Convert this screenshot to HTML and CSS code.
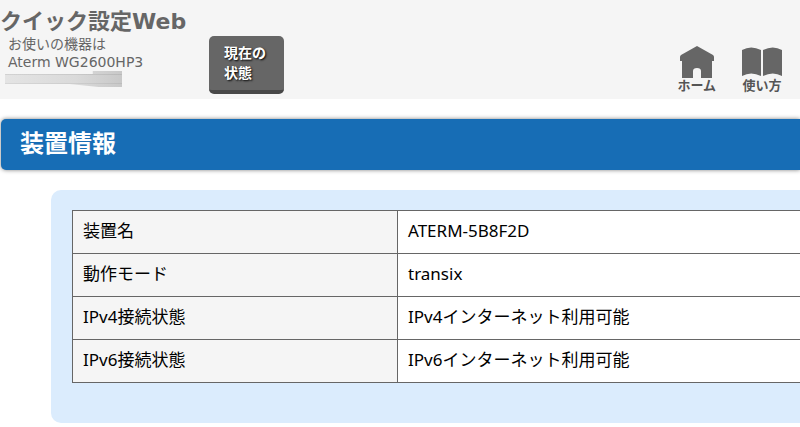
FILE: index.html
```html
<!DOCTYPE html>
<html lang="ja">
<head>
    <meta charset="UTF-8">
    <meta name="viewport" content="width=device-width, initial-scale=1.0">
    <title>クイック設定Web</title>
    <link rel="stylesheet" href="styles.css">
</head>
<body>
    <header class="header">
        <div class="brand">
            <p class="logo">クイック設定Web</p>
            <p class="model">お使いの機器は<br>Aterm WG2600HP3</p>
            <div class="mask"></div>
        </div>

        <button type="button" class="status-button">現在の<br>状態</button>

        <nav class="nav">
            <a href="#" class="nav-link">
                <svg width="34" height="33" viewBox="0 0 34 33" aria-hidden="true">
                    <path fill="#666" d="M17 0 L33 9 Q34 10 34 11 V15 H32 V32 H21 V25 Q21 22 17 22 Q13 22 13 25 V32 H2 V15 H0 V11 Q0 10 1 9 Z"/>
                </svg>
                <span>ホーム</span>
            </a>
            <a href="#" class="nav-link">
                <svg width="40" height="33" viewBox="0 0 40 33" aria-hidden="true">
                    <path fill="#666" d="M0 4 Q9 -1 19 4 V30 Q9 25 0 30 Z M21 4 Q31 -1 40 4 V30 Q31 25 21 30 Z"/>
                </svg>
                <span>使い方</span>
            </a>
        </nav>
    </header>

    <main>
        <h1 class="page-title">装置情報</h1>

        <section class="panel">
            <table class="info">
                <tr>
                    <th scope="row">装置名</th>
                    <td>ATERM-5B8F2D</td>
                </tr>
                <tr>
                    <th scope="row">動作モード</th>
                    <td>transix</td>
                </tr>
                <tr>
                    <th scope="row">IPv4接続状態</th>
                    <td>IPv4インターネット利用可能</td>
                </tr>
                <tr>
                    <th scope="row">IPv6接続状態</th>
                    <td>IPv6インターネット利用可能</td>
                </tr>
            </table>
        </section>
    </main>
</body>
</html>
```
FILE: styles.css
```css
* {
    box-sizing: border-box;
}

body {
    margin: 0;
    background-color: #fff;
    color: #000;
    font-family: "Noto Sans", "Noto Sans CJK JP", sans-serif;
}

.header {
    display: flex;
    align-items: flex-start;
    padding: 8px 18px 5px 0;
    background-color: #f5f5f5;
    color: #666;
    font-family: "DejaVu Sans", "Noto Sans CJK JP", sans-serif;
}

.brand {
    width: 209px;
}

.brand p {
    margin: 0;
}

.logo {
    font-size: 22px;
    font-weight: bold;
    line-height: 27px;
}

.model {
    padding-left: 8px;
    font-size: 14px;
    line-height: 18px;
}

/* hides the serial number */
.mask {
    width: 117px;
    height: 16px;
    margin-left: 5px;
    background:
        linear-gradient(to bottom, transparent 0 3px, rgba(0, 0, 0, 0.08) 3px 4px, transparent 4px 12px, rgba(0, 0, 0, 0.06) 12px 13px, transparent 13px),
        linear-gradient(to right, #e4e4e4 0%, #dadada 60%, #c8c8c8 100%);
    clip-path: polygon(0 3px, 75% 3px, 75% 0, 100% 0, 100% 100%, 80% 100%, 55% 13px, 0 13px);
}

.status-button {
    width: 75px;
    height: 58px;
    margin-top: 28px;
    padding: 0 15px;
    border: none;
    border-bottom: 4px solid #484848;
    border-radius: 5px;
    background-color: #666;
    color: #fff;
    font-family: inherit;
    font-size: 14px;
    font-weight: bold;
    line-height: 20px;
    text-align: left;
    text-shadow: 1px 1px 2px #000;
    white-space: nowrap;
    cursor: pointer;
}

.nav {
    display: flex;
    gap: 26px;
    margin-top: 38px;
    margin-left: auto;
}

.nav-link {
    display: flex;
    flex-direction: column;
    align-items: center;
    color: #555;
    font-size: 13px;
    font-weight: bold;
    line-height: 14px;
    text-decoration: none;
}

.page-title {
    margin: 20px 0 0 1px;
    padding: 8px 19px 11px;
    border-radius: 5px 0 0 5px;
    background-color: #176db5;
    box-shadow: 0 0 4px rgba(0, 0, 0, 0.5);
    color: #fff;
    font-size: 24px;
    line-height: 32px;
}

.panel {
    margin: 20px 0 0 51px;
    padding: 20px 0 40px 21px;
    border-radius: 10px 0 0 10px;
    background-color: #dbecfd;
}

.info {
    width: 100%;
    border-collapse: collapse;
    table-layout: fixed;
    font-size: 17px;
    line-height: 22px;
}

.info th,
.info td {
    padding: 9px 10px 11px;
    border: 1px solid #666;
    border-right: none;
    background-color: #fff;
    font-weight: normal;
    text-align: left;
}

.info th {
    width: 325px;
    background-color: #f5f5f5;
}
```
